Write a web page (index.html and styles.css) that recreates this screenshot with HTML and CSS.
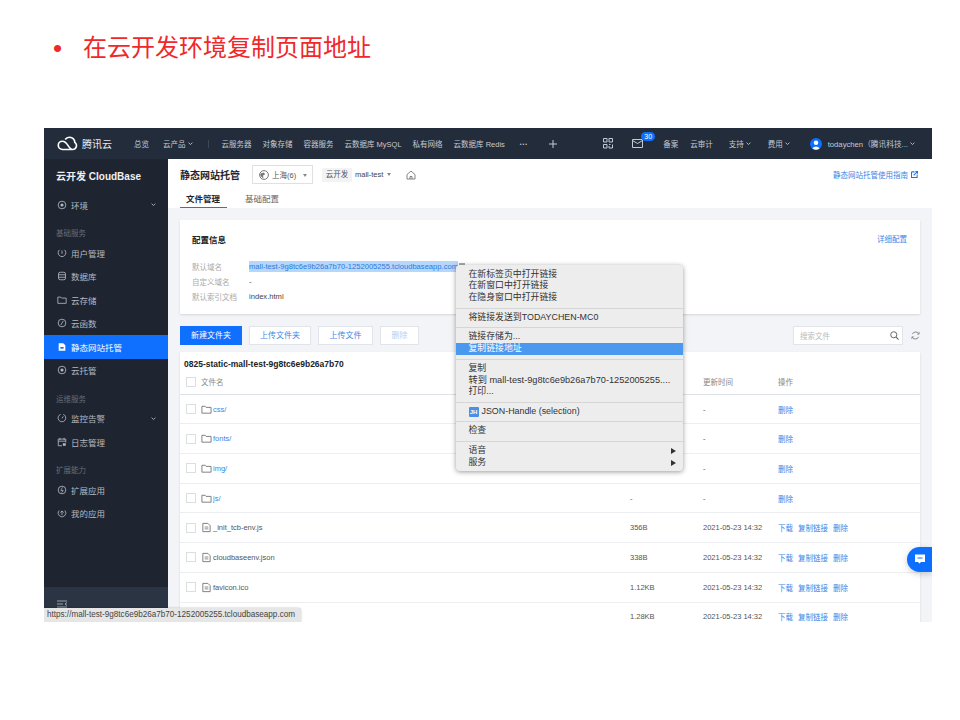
FILE: index.html
```html
<!DOCTYPE html>
<html lang="zh-CN">
<head>
<meta charset="utf-8">
<title>在云开发环境复制页面地址</title>
<link rel="stylesheet" href="styles.css">
</head>
<body>
<svg class="defs" aria-hidden="true">
  <symbol id="i-folder" viewBox="0 0 12 12"><path d="M1 2.5h3.5l1 1.2H11v6.3H1z" fill="none" stroke="currentColor" stroke-width="1"/></symbol>
  <symbol id="i-file" viewBox="0 0 12 12"><path d="M2 1.5h5.5L10 4v6.5H2z" fill="none" stroke="currentColor" stroke-width="1"/><path d="M4 5.5h4M4 7.5h4" stroke="currentColor" stroke-width=".9"/></symbol>
  <symbol id="i-hex" viewBox="0 0 12 12"><circle cx="6" cy="6" r="4.6" fill="none" stroke="currentColor"/><circle cx="6" cy="6" r="1.9" fill="currentColor"/></symbol>
  <symbol id="i-user" viewBox="0 0 12 12"><path d="M3 2.2a4.6 4.6 0 1 0 6 0" fill="none" stroke="currentColor"/><path d="M6 3v4" stroke="currentColor"/></symbol>
  <symbol id="i-db" viewBox="0 0 12 12"><rect x="1.8" y="1.5" width="8.4" height="9" rx="2" fill="none" stroke="currentColor"/><path d="M2 4.5h8M2 7.5h8" stroke="currentColor"/></symbol>
  <symbol id="i-func" viewBox="0 0 12 12"><circle cx="6" cy="6" r="4.6" fill="none" stroke="currentColor"/><path d="M4.5 8.5 7.5 3.5" stroke="currentColor"/></symbol>
  <symbol id="i-site" viewBox="0 0 12 12"><path d="M2 1.500h5.500L10 4v6.500H2z" fill="currentColor"/><path d="M4 6h4v2H4z" fill="#0f6fff"/></symbol>
  <symbol id="i-gauge" viewBox="0 0 12 12"><path d="M7.500 1.600a4.600 4.600 0 1 1-3.200 0" fill="none" stroke="currentColor"/><path d="M6 6.500 7.500 4" stroke="currentColor"/></symbol>
  <symbol id="i-cal" viewBox="0 0 12 12"><path d="M1.500 2.500h9v4M6 10.500H1.500v-8M1.500 5h9M3.500 1v2.500M8.500 1v2.500" fill="none" stroke="currentColor"/><rect x="7" y="7.500" width="3.500" height="3" fill="currentColor"/></symbol>
  <symbol id="i-ext" viewBox="0 0 12 12"><circle cx="6" cy="6" r="4.600" fill="none" stroke="currentColor"/><path d="M6.500 2.800 4.500 6.500h3L5.500 9.200" fill="none" stroke="currentColor" stroke-width=".9"/></symbol>
  <symbol id="i-app" viewBox="0 0 12 12"><path d="M2.500 3a4.600 4.600 0 1 0 7 0" fill="none" stroke="currentColor"/><path d="M6 8.500V3.500M4 5.500l2-2 2 2" fill="none" stroke="currentColor"/></symbol>
  <symbol id="i-down" viewBox="0 0 8 8"><path d="M1.800 3 4 5.200 6.200 3" fill="none" stroke="currentColor"/></symbol>
</svg>

<header class="slide-title"><span class="bullet">•</span><h1>在云开发环境复制页面地址</h1></header>

<section class="window">
  <div class="topbar">
    <div class="brand">
      <svg class="logo" viewBox="0 0 24 16"><path d="M7 14.500a4.500 4.500 0 0 1 0-9c2.500 0 4 1.500 6 4.500s3 4.500 5 4.500zM18 14.500a4.300 4.300 0 0 0 2.500-7.800 5.800 5.800 0 0 0-10.500-3" fill="none" stroke="#fff" stroke-width="1.800"/></svg>
      <span>腾讯云</span>
    </div>
    <nav class="nav">
      <a class="first">总览</a>
      <a class="drop">云产品<svg class="caret"><use href="#i-down"/></svg></a>
      <i class="vline"></i>
      <a>云服务器</a><a>对象存储</a><a>容器服务</a><a>云数据库 MySQL</a><a>私有网络</a><a>云数据库 Redis</a>
      <b class="dots">•••</b>
      <svg class="plus" viewBox="0 0 8 8"><path d="M4 0v8M0 4h8" stroke="#c5cad2" stroke-width="1"/></svg>
    </nav>
    <div class="tools">
      <svg class="qr" viewBox="0 0 10 11"><path d="M.5.500h3.500v3.500H.5zM6 .500h3.500v3.500H6zM.5 6.500h3.500V10H.5zM6 6.500h1.500M9.500 6.500V10H6V8" fill="none" stroke="#c5cad2"/></svg>
      <span class="mail">
        <svg viewBox="0 0 11 9"><path d="M.5.500h10v8H.5zM.5 1.500l5 3 5-3" fill="none" stroke="#c5cad2"/></svg>
        <em class="badge">30</em>
      </span>
      <a class="near">备案</a><a>云审计</a>
      <a class="drop">支持<svg class="caret"><use href="#i-down"/></svg></a>
      <a class="drop">费用<svg class="caret"><use href="#i-down"/></svg></a>
      <span class="account">
        <svg class="avatar" viewBox="0 0 12 12"><circle cx="6" cy="6" r="6" fill="#0d6fff"/><circle cx="6" cy="4.800" r="2.300" fill="#fff"/><path d="M2.500 10.500c.5-2.200 6.500-2.200 7 0a6 6 0 0 1-7 0z" fill="#fff"/></svg>
        <a class="drop">todaychen（腾讯科技...<svg class="caret"><use href="#i-down"/></svg></a>
      </span>
    </div>
  </div>

  <div class="main">
    <aside class="side">
      <h2>云开发 CloudBase</h2>
      <ul class="menu env">
        <li><svg class="ic"><use href="#i-hex"/></svg>环境<svg class="caret end"><use href="#i-down"/></svg></li>
      </ul>
      <h3>基础服务</h3>
      <ul class="menu">
        <li><svg class="ic"><use href="#i-user"/></svg>用户管理</li>
        <li><svg class="ic"><use href="#i-db"/></svg>数据库</li>
        <li><svg class="ic"><use href="#i-folder"/></svg>云存储</li>
        <li><svg class="ic"><use href="#i-func"/></svg>云函数</li>
        <li class="on"><svg class="ic"><use href="#i-site"/></svg>静态网站托管</li>
        <li><svg class="ic"><use href="#i-hex"/></svg>云托管</li>
      </ul>
      <h3>运维服务</h3>
      <ul class="menu">
        <li><svg class="ic"><use href="#i-gauge"/></svg>监控告警<svg class="caret end"><use href="#i-down"/></svg></li>
        <li><svg class="ic"><use href="#i-cal"/></svg>日志管理</li>
      </ul>
      <h3>扩展能力</h3>
      <ul class="menu">
        <li><svg class="ic"><use href="#i-ext"/></svg>扩展应用</li>
        <li><svg class="ic"><use href="#i-app"/></svg>我的应用</li>
      </ul>
      <div class="collapse"><svg viewBox="0 0 10 8"><path d="M0 1h10M0 4h6M0 7h10M10 2.500 8 4l2 1.500" fill="none" stroke="#aab0b9" stroke-width=".9"/></svg></div>
    </aside>

    <div class="content">
      <div class="head">
        <div class="head-top">
          <strong class="page-name">静态网站托管</strong>
          <span class="region"><svg viewBox="0 0 10 10"><circle cx="5" cy="5" r="4.400" fill="none" stroke="#777"/><path d="M1.500 3.500 5 2.500l1 2-2 1 .5 3-3-2.500z" fill="#777"/></svg>上海(6)<i class="tri"></i></span>
          <span class="tag">云开发</span>
          <span class="env-name">mall-test<i class="tri"></i></span>
          <svg class="home" viewBox="0 0 10 10"><path d="M1 4.500 5 1l4 3.500V9H1zM4 9V6.500h2V9" fill="none" stroke="#666" stroke-width=".8"/></svg>
          <a class="guide">静态网站托管使用指南
            <svg viewBox="0 0 8 8"><path d="M.5 1h3.500M.5 1v6.500H7V4" fill="none" stroke="#1a73e8" stroke-width="1.200"/><path d="M3 5 7.500.5M5 .5h2.500V3" fill="none" stroke="#1a73e8" stroke-width="1.200"/></svg>
          </a>
        </div>
        <div class="tabs"><a class="active">文件管理</a><a>基础配置</a></div>
      </div>

      <div class="body">
        <section class="card">
          <div class="card-head"><strong>配置信息</strong><a>详细配置</a></div>
          <dl class="info">
            <dt>默认域名</dt><dd><span class="sel">mall-test-9g8tc6e9b26a7b70-1252005255.tcloudbaseapp.com</span><i class="copy"></i></dd>
            <dt>自定义域名</dt><dd>-</dd>
            <dt>默认索引文档</dt><dd>index.html</dd>
          </dl>
        </section>

        <div class="toolbar">
          <a class="btn primary">新建文件夹</a>
          <a class="btn w62">上传文件夹</a>
          <a class="btn w55">上传文件</a>
          <a class="btn off">删除</a>
          <span class="search">搜索文件<svg viewBox="0 0 10 10"><circle cx="4.200" cy="4.200" r="3.400" fill="none" stroke="#666" stroke-width="1.100"/><path d="m6.800 6.800 2.700 2.700" stroke="#666" stroke-width="1.200"/></svg></span>
          <svg class="refresh" viewBox="0 0 10 10"><path d="M8.600 3A4 4 0 0 0 1.500 3.500M1.400 7A4 4 0 0 0 8.500 6.500" fill="none" stroke="#777"/><path d="M9 1v2.500H6.800M1 9V6.500h2.200" fill="none" stroke="#777" stroke-width=".8"/></svg>
        </div>

        <section class="table">
          <div class="path">0825-static-mall-test-9g8tc6e9b26a7b70</div>
          <div class="row th"><i class="check"></i><span class="name">文件名</span><span class="size"></span><span class="time">更新时间</span><span class="ops">操作</span></div>
          <div class="row"><i class="check"></i><span class="name dir"><svg><use href="#i-folder"/></svg><a>css/</a></span><span class="size">-</span><span class="time">-</span><span class="ops"><a>删除</a></span></div>
          <div class="row"><i class="check"></i><span class="name dir"><svg><use href="#i-folder"/></svg><a>fonts/</a></span><span class="size">-</span><span class="time">-</span><span class="ops"><a>删除</a></span></div>
          <div class="row"><i class="check"></i><span class="name dir"><svg><use href="#i-folder"/></svg><a>img/</a></span><span class="size">-</span><span class="time">-</span><span class="ops"><a>删除</a></span></div>
          <div class="row"><i class="check"></i><span class="name dir"><svg><use href="#i-folder"/></svg><a>js/</a></span><span class="size">-</span><span class="time">-</span><span class="ops"><a>删除</a></span></div>
          <div class="row"><i class="check"></i><span class="name"><svg><use href="#i-file"/></svg>_init_tcb-env.js</span><span class="size">356B</span><span class="time">2021-05-23 14:32</span><span class="ops"><a>下载</a><a>复制链接</a><a>删除</a></span></div>
          <div class="row"><i class="check"></i><span class="name"><svg><use href="#i-file"/></svg>cloudbaseenv.json</span><span class="size">338B</span><span class="time">2021-05-23 14:32</span><span class="ops"><a>下载</a><a>复制链接</a><a>删除</a></span></div>
          <div class="row"><i class="check"></i><span class="name"><svg><use href="#i-file"/></svg>favicon.ico</span><span class="size">1.12KB</span><span class="time">2021-05-23 14:32</span><span class="ops"><a>下载</a><a>复制链接</a><a>删除</a></span></div>
          <div class="row"><i class="check"></i><span class="name"></span><span class="size">1.28KB</span><span class="time">2021-05-23 14:32</span><span class="ops"><a>下载</a><a>复制链接</a><a>删除</a></span></div>
        </section>
      </div>
    </div>
  </div>

  <ul class="ctx">
    <li>在新标签页中打开链接</li>
    <li>在新窗口中打开链接</li>
    <li>在隐身窗口中打开链接</li>
    <li class="sep"></li>
    <li>将链接发送到TODAYCHEN-MC0</li>
    <li class="sep"></li>
    <li>链接存储为...</li>
    <li class="hl">复制链接地址</li>
    <li class="sep"></li>
    <li>复制</li>
    <li class="long">转到 mall-test-9g8tc6e9b26a7b70-1252005255....</li>
    <li>打印...</li>
    <li class="sep"></li>
    <li class="ext"><b class="jh">JH</b>JSON-Handle (selection)</li>
    <li class="sep"></li>
    <li>检查</li>
    <li class="sep"></li>
    <li class="more">语音</li>
    <li class="more">服务</li>
  </ul>

  <div class="status">https://mall-test-9g8tc6e9b26a7b70-1252005255.tcloudbaseapp.com</div>

  <div class="chat"><svg viewBox="0 0 12 12"><path d="M1 1.500h10v7.500H7l-1.500 1.500L4 9H1z" fill="#fff"/><path d="M3.500 5h5" stroke="#0d6fff"/></svg></div>
</section>
</body>
</html>
```
FILE: styles.css
```css
* { box-sizing: border-box; }
html, body { margin: 0; padding: 0; }
body {
  width: 960px;
  height: 720px;
  overflow: hidden;
  background: #fff;
  font-family: "Liberation Sans", "Noto Sans CJK SC", sans-serif;
  font-size: 8px;
  color: #444;
}
ul, dl, dd, h1, h2, h3 { margin: 0; padding: 0; list-style: none; font-weight: normal; }
i, em { font-style: normal; }
.defs { position: absolute; width: 0; height: 0; }

.slide-title {
  height: 128px;
  padding: 31px 0 0 53px;
  display: flex;
  align-items: flex-start;
  color: #f0282a;
}
.bullet { width: 30px; font-size: 26px; line-height: 34px; }
.slide-title h1 { font-size: 24px; line-height: 34px; }

.window {
  position: relative;
  width: 888px;
  height: 494px;
  margin-left: 44px;
  display: flex;
  flex-direction: column;
  overflow: hidden;
  box-shadow: inset 0 0 0 1px #e4e6ea;
}

/* top bar */
.topbar {
  flex: none;
  height: 31px;
  background: #222c3a;
  color: #c5cad2;
  display: flex;
  align-items: center;
  font-size: 7.5px;
}
.brand { display: flex; align-items: center; padding-left: 12px; gap: 4px; color: #e8eaee; font-size: 10px; width: 90px; }
.logo { width: 22px; height: 15px; }
.nav { display: flex; align-items: center; gap: 11px; }
.nav a.first { margin-right: 3px; }
.drop { display: inline-flex; align-items: center; }
.caret { width: 7px; height: 7px; color: currentColor; margin-left: 1px; }
.vline { width: 1px; height: 8px; background: #3c4757; margin: 0 2px 0 3px; }
.dots { font-size: 5px; letter-spacing: 1px; font-weight: normal; margin-left: 4px; }
.plus { width: 8px; height: 8px; margin-left: 10px; }
.tools { margin-left: auto; display: flex; align-items: center; padding-right: 16px; gap: 16px; }
.qr { width: 10px; height: 11px; margin-right: 3px; }
.mail { position: relative; display: block; width: 11px; height: 9px; margin-right: 4px; }
.mail svg { display: block; width: 11px; height: 9px; }
.near { margin-right: -4px; }
.badge {
  position: absolute;
  left: 9px;
  top: -7px;
  width: 14px;
  height: 9px;
  border-radius: 5px;
  background: #0d6fff;
  color: #fff;
  font-size: 7px;
  line-height: 9px;
  text-align: center;
}
.account { display: flex; align-items: center; gap: 6px; margin-left: 3px; font-size: 7.700px; }
.avatar { width: 12px; height: 12px; }

/* layout */
.main { flex: 1; min-height: 0; display: flex; }
.side {
  position: relative;
  flex: none;
  width: 124px;
  background: #1e2530;
  color: #b4b9c1;
  font-size: 8.500px;
}
.side h2 { padding: 11px 0 0 12px; height: 33px; color: #eef0f3; font-size: 10px; font-weight: bold; line-height: 13px; }
.side h3 { height: 15px; margin-top: 9.500px; padding-left: 12px; color: #666d78; font-size: 7.500px; line-height: 15px; }
.menu.env { margin-top: 1px; }
.menu li { display: flex; align-items: center; height: 23.500px; padding-left: 13px; position: relative; }
.menu li.on { background: #0f6fff; color: #fff; }
.ic { width: 10px; height: 10px; margin-right: 4px; }
.caret.end { position: absolute; right: 11px; top: 8px; }
.collapse {
  position: absolute;
  left: 0; right: 0; bottom: 0;
  height: 35px;
  padding: 13px 0 0 13px;
  background: #2b3442;
}
.collapse svg { display: block; width: 10px; height: 8px; }

.content { flex: 1; min-width: 0; background: #f3f4f7; display: flex; flex-direction: column; overflow: hidden; }
.head { flex: none; height: 49px; background: #fff; padding: 6px 14px 0 12px; display: flex; flex-direction: column; }
.head-top { display: flex; align-items: center; height: 19px; font-size: 7.500px; }
.page-name { width: 72px; font-size: 10px; color: #1e2530; }
.region {
  width: 61px; height: 19px; display: flex; align-items: center; gap: 3px;
  padding-left: 6px; border: 1px solid #dde0e5; position: relative; color: #555;
}
.region svg { width: 10px; height: 10px; }
.tri { display: inline-block; width: 0; height: 0; border: 2.500px solid transparent; border-top: 3px solid #888; border-bottom: 0; margin-left: 4px; vertical-align: 1px; }
.region .tri { position: absolute; right: 5px; top: 8px; }
.tag { margin-left: 9px; width: 30px; height: 14px; line-height: 14px; text-align: center; background: #f2f3f5; color: #555; }
.env-name { margin-left: 3px; width: 51px; color: #444; }
.home { width: 10px; height: 10px; }
.guide { margin-left: auto; display: flex; align-items: center; gap: 3px; color: #3d85e6; font-size: 7.500px; }
.guide svg { width: 7px; height: 7px; }
.tabs { display: flex; margin-top: auto; height: 17px; font-size: 8.500px; color: #666; }
.tabs a { padding: 1px 6px 0; }
.tabs a + a { margin-left: 12px; }
.tabs .active { width: 47px; color: #1e2530; font-weight: bold; border-bottom: 1.500px solid #1f78e6; padding-left: 6px; white-space: nowrap; }

.body { flex: 1; min-height: 0; padding: 12px 12px 0; display: flex; flex-direction: column; }
.card { flex: none; height: 94px; background: #fff; padding: 12px 13px 0 12px; box-shadow: 0 1px 2px rgba(0,0,0,.12); }
.card-head { display: flex; justify-content: space-between; align-items: center; height: 13px; }
.card-head strong { font-size: 8.500px; color: #222; }
.card-head a { color: #3d85e6; font-size: 7.500px; }
.info { margin-top: 14px; display: grid; grid-template-columns: 57px 1fr; grid-auto-rows: 15px; align-items: center; font-size: 7.600px; }
.info dt { color: #aaa; font-size: 7.500px; }
.info dd { color: #444; display: flex; align-items: center; }
.sel { background: #b5d7fb; color: #2b79dd; line-height: 11px; }
.copy { width: 6px; height: 2px; margin: -6px 0 0 1px; background: #aaa; }

.toolbar { flex: none; display: flex; align-items: center; height: 20px; margin-top: 11px; gap: 7px; }
.btn { height: 19px; line-height: 18px; text-align: center; background: #fff; border: 1px solid #e1e4e8; color: #3d85e6; font-size: 8px; }
.btn.primary { width: 62px; background: #0f6fff; border-color: #0f6fff; color: #fff; }
.btn.w62 { width: 62px; }
.btn.w55 { width: 55px; }
.btn.off { width: 39px; color: #b5d0f3; }
.search {
  margin-left: auto; width: 110px; height: 19px; padding: 0 3px 0 6px;
  display: flex; align-items: center; justify-content: space-between;
  background: #fff; border: 1px solid #e1e4e8; color: #bbb; font-size: 7.500px;
}
.search svg { width: 9px; height: 9px; }
.refresh { width: 9px; height: 9px; margin: 0 0 0 1px; }

.table { flex: 1; min-height: 0; margin-top: 7px; background: #fff; box-shadow: 0 1px 2px rgba(0,0,0,.12); overflow: hidden; }
.path { height: 18px; padding: 7px 0 0 4px; font-size: 8.500px; line-height: 11px; font-weight: bold; color: #222; }
.row { display: flex; align-items: center; height: 29.700px; border-bottom: 1px solid #eceef2; color: #555; font-size: 7.500px; }
.row.th { height: 24.700px; border-bottom-color: #dfe2e8; color: #888; }
.check { flex: none; width: 10px; height: 10px; margin-left: 6px; background: #fff; border: 1px solid #dcdee2; }
.name { flex: none; width: 429px; margin-left: 5px; display: flex; align-items: center; gap: 1px; }
.name svg { width: 11px; height: 11px; color: #777; }
.name a { color: #3d85e6; }
.size { flex: none; width: 73px; }
.time { flex: none; width: 75px; }
.ops { display: flex; gap: 5px; color: #3d85e6; font-size: 7.500px; }
.th .ops { color: #888; }

/* context menu */
.ctx {
  position: absolute;
  left: 412px;
  top: 137px;
  width: 227px;
  padding: 3.500px 0 2px;
  background: #ededed;
  border-radius: 4px;
  box-shadow: 0 1px 5px rgba(0,0,0,.4);
  color: #333;
  font-size: 8.900px;
}
.ctx li { height: 11.900px; line-height: 11.900px; padding-left: 12.500px; position: relative; white-space: nowrap; }
.ctx .sep { height: 7.600px; padding: 0; }
.ctx .sep::before { content: ""; display: block; position: absolute; left: 0; right: 0; top: 3.500px; height: 1px; background: #d6d6d6; }
.ctx .hl { background: #4b99ee; color: #fff; }
.ctx .long { font-size: 9.200px; }
.ctx .ext { display: flex; align-items: center; gap: 3px; }
.jh { width: 10px; height: 10px; line-height: 10px; background: #4d8fe0; color: #fff; font-size: 6px; text-align: center; border-radius: 1px; }
.ctx .more::after { content: ""; position: absolute; right: 7px; top: 3px; border-left: 5px solid #333; border-top: 3px solid transparent; border-bottom: 3px solid transparent; }

.status {
  position: absolute;
  left: 0;
  bottom: 0;
  height: 14px;
  width: 257px;
  padding-left: 3px;
  background: #e6e6e6;
  border-radius: 0 3px 0 0;
  box-shadow: 0 0 2px rgba(0,0,0,.3);
  color: #444;
  font-size: 8.150px;
  line-height: 14px;
  white-space: nowrap;
}

.chat {
  position: absolute;
  right: 0;
  top: 419px;
  width: 25px;
  height: 25px;
  padding: 6px 0 0 7px;
  background: #0d6fff;
  border-radius: 12.500px 0 0 12.500px;
  box-shadow: 0 2px 6px rgba(0,0,0,.2);
}
.chat svg { display: block; width: 12px; height: 12px; }
```
